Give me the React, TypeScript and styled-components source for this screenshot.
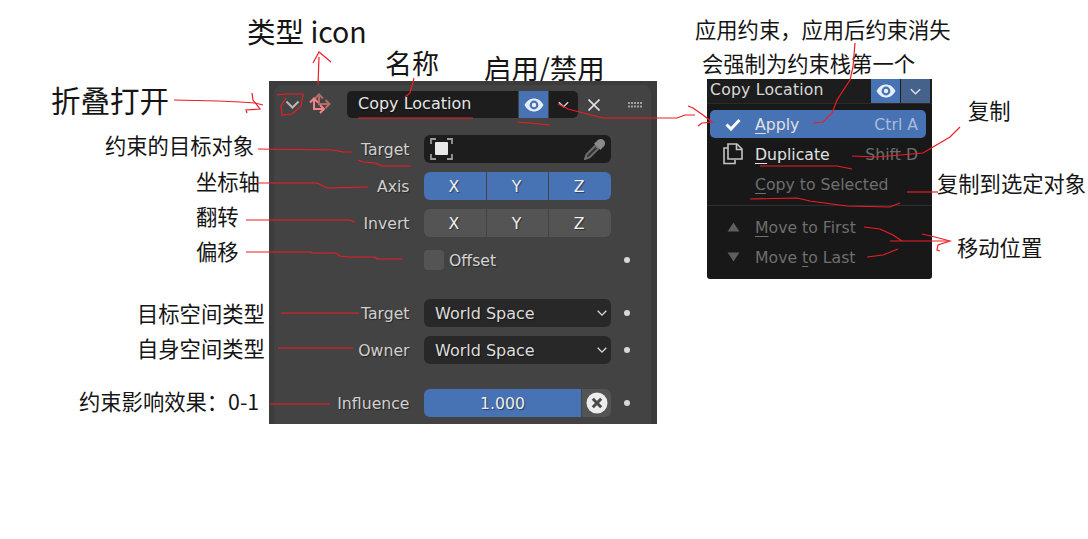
import React from 'react'
import styled, { createGlobalStyle } from 'styled-components'

const GlobalStyle = createGlobalStyle`
  html, body {
    margin: 0;
    padding: 0;
    background: #fff;
  }
`

const Canvas = styled.div`
  position: relative;
  width: 1088px;
  height: 539px;
  overflow: hidden;
  background: #fff;
  font-family: 'DejaVu Sans', sans-serif;
`

const Note = styled.div<{ $x: number; $y: number; $size?: number }>`
  position: absolute;
  left: ${(p) => p.$x}px;
  top: ${(p) => p.$y - (p.$size ?? 21.3) / 2 - 2}px;
  font-family: 'Noto Sans CJK SC', sans-serif;
  font-size: ${(p) => p.$size ?? 21.3}px;
  line-height: 1;
  color: #151515;
  white-space: pre;
`

const Scribbles = styled.svg`
  position: absolute;
  left: 0;
  top: 0;
  z-index: 3;
  pointer-events: none;
`

const Panel = styled.section`
  position: absolute;
  left: 269px;
  top: 81px;
  width: 388px;
  height: 343px;
  box-sizing: border-box;
  padding: 4px 6px 0 5px;
  background: #3c3c3c;
  z-index: 1;
`

const Card = styled.div`
  height: 100%;
  box-sizing: border-box;
  padding-top: 6px;
  background: #434343;
  border-radius: 8px 8px 0 0;
  color: #e6e6e6;
  font-size: 15.7px;
  text-shadow: 1px 1px 1px rgba(0, 0, 0, 0.45);
`

const Header = styled.header`
  display: flex;
  align-items: center;
  height: 27px;
  padding-left: 9px;
`

const HeadIcon = styled.span<{ $w: number; $gap: number }>`
  display: flex;
  align-items: center;
  justify-content: center;
  flex: none;
  width: ${(p) => p.$w}px;
  margin-right: ${(p) => p.$gap}px;
`

const NameGroup = styled.div`
  display: flex;
  height: 27px;
  margin-right: 8px;
  border-radius: 5px;
  overflow: hidden;
`

const NameField = styled.div`
  width: 160px;
  padding-left: 11px;
  background: #1d1d1d;
  line-height: 26px;
  font-size: 16px;
`

const HeadToggle = styled.div<{ $active?: boolean }>`
  display: flex;
  align-items: center;
  justify-content: center;
  width: 29px;
  margin-left: 1px;
  background: ${(p) => (p.$active ? '#4772b3' : '#1d1d1d')};
`

const Row = styled.div<{ $top: number }>`
  display: grid;
  grid-template-columns: 136px 187px 32px;
  column-gap: 14px;
  align-items: center;
  margin-top: ${(p) => p.$top}px;
  height: 28px;
`

const CheckRow = styled(Row)`
  height: 20px;
`

const Label = styled.div`
  padding-right: 0.5px;
  text-align: right;
  color: #d0d0d0;
`

const Dot = styled.span`
  justify-self: start;
  margin-left: -1px;
  width: 6px;
  height: 6px;
  border-radius: 50%;
  background: #d8d8d8;
`

const TargetField = styled.div`
  display: flex;
  align-items: center;
  justify-content: space-between;
  height: 28px;
  padding: 0 5px 0 6px;
  background: #1d1d1d;
  border-radius: 6px;
`

const AxisGroup = styled.div`
  display: grid;
  grid-template-columns: repeat(3, 1fr);
  column-gap: 1px;
  height: 28px;
  border-radius: 6px;
  overflow: hidden;
`

const AxisButton = styled.div<{ $active?: boolean }>`
  display: flex;
  align-items: center;
  justify-content: center;
  padding-right: 2px;
  background: ${(p) => (p.$active ? '#4772b3' : '#545454')};
  color: #f0f0f0;
`

const CheckWrap = styled.div`
  display: flex;
  align-items: center;
  gap: 5px;
  color: #d4d4d4;
`

const CheckBox = styled.span`
  width: 20px;
  height: 20px;
  border-radius: 4px;
  background: #545454;
`

const Select = styled.div`
  display: flex;
  align-items: center;
  justify-content: space-between;
  height: 28px;
  padding: 0 3px 0 11px;
  background: #282828;
  border-radius: 6px;
  color: #dcdcdc;
  font-size: 16px;
`

const SliderGroup = styled.div`
  display: flex;
  height: 28px;
  border-radius: 6px;
  overflow: hidden;
`

const SliderBar = styled.div`
  flex: 1;
  display: flex;
  align-items: center;
  justify-content: center;
  background: #4772b3;
  color: #ececec;
`

const SliderClear = styled.div`
  display: flex;
  align-items: center;
  justify-content: center;
  width: 29px;
  margin-left: 1px;
  background: #545454;
`

const Popup = styled.aside`
  position: absolute;
  left: 707px;
  top: 79px;
  width: 225px;
  height: 200px;
  background: #181818;
  color: #e0e0e0;
  font-size: 15.7px;
  border-radius: 0 0 3px 3px;
  z-index: 1;
`

const PopupHead = styled.div`
  display: flex;
  height: 24px;
  padding-right: 2px;
  background: #1d1d1d;
  border-bottom: 1px solid #2a2a2a;
`

const PopupTitle = styled.div`
  flex: 1;
  padding-left: 3px;
  line-height: 21px;
  letter-spacing: 0.2px;
  color: #d8d8d8;
`

const PopupToggle = styled.div<{ $tone: string }>`
  display: flex;
  align-items: center;
  justify-content: center;
  width: 29px;
  margin-left: 1px;
  background: ${(p) => p.$tone};
`

const MenuList = styled.div`
  padding: 6px 6px 0 3px;
`

const MenuItem = styled.div<{ $active?: boolean; $dim?: boolean }>`
  display: grid;
  grid-template-columns: 45px 1fr auto;
  align-items: center;
  height: 28px;
  margin-bottom: 2px;
  padding-right: 8px;
  border-radius: 5px;
  background: ${(p) => (p.$active ? '#4772b3' : 'transparent')};
  color: ${(p) => (p.$dim ? '#6e6e6e' : '#e0e0e0')};
`

const MenuIcon = styled.span`
  display: flex;
  justify-content: center;
  padding-left: 1px;
`

const Shortcut = styled.span<{ $active?: boolean }>`
  color: ${(p) => (p.$active ? '#a8bcd9' : '#6e6e6e')};
`

const Mnemonic = styled.span`
  text-decoration: underline;
  text-underline-offset: 3px;
`

const Separator = styled.div`
  height: 1px;
  margin: 7px -6px 7px -3px;
  background: #2e2e2e;
`

const Chevron = ({ color = '#d0d0d0', size = 14 }: { color?: string; size?: number }) => (
  <svg width={size} height={size} viewBox="0 0 14 14" fill="none" stroke={color} strokeWidth="1.6">
    <path d="M2 4.5 7 9.5 12 4.5" />
  </svg>
)

const Eye = () => (
  <svg width="20" height="14" viewBox="0 0 20 14">
    <path d="M0.5 7C3 2.5 6.4 0.5 10 0.5S17 2.5 19.5 7C17 11.5 13.6 13.5 10 13.5S3 11.5 0.5 7Z" fill="#e8eef8" />
    <circle cx="10" cy="7" r="4.4" fill="#4772b3" />
    <circle cx="10" cy="7" r="2.2" fill="#e8eef8" />
  </svg>
)

const MoveIcon = () => (
  <svg width="24" height="24" viewBox="0 0 24 24" fill="none" strokeWidth="2">
    <g stroke="#b56a6a">
      <path d="M11 1.5V11H21.5" />
      <path d="M7 5.5 11 1.5 15 5.5M17.5 7 21.5 11 17.5 15" />
    </g>
    <g stroke="#f08585">
      <path d="M6 5.5V16H16" />
      <path d="M2 9.5 6 5.5 10 9.5M12 12 16 16 12 20" />
    </g>
  </svg>
)

const CloseIcon = () => (
  <svg width="12" height="12" viewBox="0 0 12 12" stroke="#e2e2e2" strokeWidth="1.6">
    <path d="M0.5 0.5 11.5 11.5M11.5 0.5 0.5 11.5" />
  </svg>
)

const GripIcon = () => (
  <svg width="16" height="6" viewBox="0 0 16 6" fill="#a0a0a0">
    {[0, 3, 6, 9, 12].flatMap((x) =>
      [0, 3.5].map((y) => <rect key={`${x}-${y}`} x={x + 1} y={y} width="2" height="2" />)
    )}
  </svg>
)

const TargetIcon = () => (
  <svg width="24" height="24" viewBox="0 0 24 24" fill="none">
    <g stroke="#9a9a9a" strokeWidth="1.8">
      <path d="M1 7V2H6M17 2H22V7M22 17V22H17M6 22H1V17" />
    </g>
    <rect x="5" y="5" width="13" height="13" rx="1" fill="#e8e8e8" />
  </svg>
)

const DropperIcon = () => (
  <svg width="22" height="22" viewBox="0 0 22 22">
    <path d="M11.5 7.5 2.5 16.5 1 21 5.5 19.5 14.5 10.5Z" fill="#333" stroke="#6e6e6e" strokeWidth="2" />
    <path d="M10 5.5 12.5 3.5C14 0.8 17.5 0 19.8 2.2C22 4.5 21.2 8 18.5 9.5L16.5 12Z" fill="#8a8a8a" />
  </svg>
)

const ClearIcon = () => (
  <svg width="22" height="22" viewBox="0 0 22 22">
    <circle cx="11" cy="11" r="10.5" fill="#ececec" />
    <path d="M6.8 6.8 15.2 15.2M15.2 6.8 6.8 15.2" stroke="#4a4a4a" strokeWidth="3" />
  </svg>
)

const CheckIcon = () => (
  <svg width="16" height="13" viewBox="0 0 16 13" fill="none" stroke="#fff" strokeWidth="3">
    <path d="M1.5 6.5 6 11 14.5 2" />
  </svg>
)

const DuplicateIcon = () => (
  <svg width="22" height="22" viewBox="0 0 22 22" fill="none" stroke="#c4c4c4" strokeWidth="1.6">
    <path d="M6 5H2V20.5H13V17" />
    <path d="M6 1H15L20 6V16H6Z" />
    <path d="M14.5 1V6.5H20" />
  </svg>
)

const Triangle = ({ down }: { down?: boolean }) => (
  <svg width="13" height="10" viewBox="0 0 14 11" fill="#5f5f5f">
    <path d={down ? 'M0.5 0.5H13.5L7 10.5Z' : 'M7 0.5 13.5 10.5H0.5Z'} />
  </svg>
)

const notes: { text: string; x: number; y: number; size?: number }[] = [
  { text: '类型 icon', x: 247, y: 33, size: 28.5 },
  { text: '名称', x: 385, y: 64, size: 27 },
  { text: '启用/禁用', x: 484, y: 70, size: 27.5 },
  { text: '折叠打开', x: 51, y: 102, size: 29.5 },
  { text: '约束的目标对象', x: 105, y: 147 },
  { text: '坐标轴', x: 196, y: 183 },
  { text: '翻转', x: 196, y: 218 },
  { text: '偏移', x: 196, y: 253 },
  { text: '目标空间类型', x: 137, y: 315 },
  { text: '自身空间类型', x: 137, y: 350 },
  { text: '约束影响效果：0-1', x: 79, y: 403 },
  { text: '应用约束，应用后约束消失', x: 695, y: 31 },
  { text: '会强制为约束栈第一个', x: 702, y: 65 },
  { text: '复制', x: 968, y: 112 },
  { text: '复制到选定对象', x: 937, y: 185 },
  { text: '移动位置', x: 957, y: 249 },
]

const redLines = [
  '318,85 319,57',
  '313,63 319,52 325,57 331,62',
  '414,78 410,93 405,97',
  '358,118 473,118',
  '517,122 530,123 550,125',
  '558,104 568,109 603,118 677,118 685,115 695,115',
  '688,106 693,108 703,115 712,122 702,123 698,126',
  '174,100 218,101 240,102 255,103 263,105',
  '252,93 253,100 260,109 246,110 247,113',
  '277,95 286,94 303,94 301,106 292,114 282,115 281,106 286,98',
  '258,149 333,150 343,152 352,152',
  '358,160 363,162 375,163 382,166 411,166',
  '257,183 317,183 327,188 368,187',
  '246,220 350,220 355,222',
  '246,252 311,252 312,253 336,253 340,256 348,257 375,257 377,259 403,259',
  '281,313 359,313',
  '278,348 353,348',
  '270,404 330,404',
  '855,43 853,67 850,80 837,100 832,113 823,122 813,123',
  '852,156 877,157 923,153 933,147 950,137 960,127',
  '760,166 837,166 852,169',
  '907,192 938,192',
  '750,199 797,198 810,201 847,206 890,207 900,203',
  '864,227 880,229 893,235 902,241',
  '890,241 948,241',
  '867,257 883,255 898,249',
  '922,234 935,237 950,241 938,245 937,250 940,251',
]

function AxisRow({ label, top, active }: { label: string; top: number; active?: boolean }) {
  return (
    <Row $top={top}>
      <Label>{label}</Label>
      <AxisGroup>
        {['X', 'Y', 'Z'].map((axis) => (
          <AxisButton key={axis} $active={active}>
            {axis}
          </AxisButton>
        ))}
      </AxisGroup>
    </Row>
  )
}

function SpaceRow({ label, top }: { label: string; top: number }) {
  return (
    <Row $top={top}>
      <Label>{label}</Label>
      <Select>
        World Space
        <Chevron size={12} color="#d8d8d8" />
      </Select>
      <Dot />
    </Row>
  )
}

export default function App() {
  return (
    <Canvas>
      <GlobalStyle />
      {notes.map((note) => (
        <Note key={note.text} $x={note.x} $y={note.y} $size={note.size}>
          {note.text}
        </Note>
      ))}

      <Panel>
        <Card>
          <Header>
            <HeadIcon $w={18} $gap={7}>
              <Chevron color="#b8b8b8" size={17} />
            </HeadIcon>
            <HeadIcon $w={24} $gap={15}>
              <MoveIcon />
            </HeadIcon>
            <NameGroup>
              <NameField>Copy Location</NameField>
              <HeadToggle $active>
                <Eye />
              </HeadToggle>
              <HeadToggle>
                <Chevron size={13} />
              </HeadToggle>
            </NameGroup>
            <HeadIcon $w={16} $gap={25}>
              <CloseIcon />
            </HeadIcon>
            <HeadIcon $w={16} $gap={0}>
              <GripIcon />
            </HeadIcon>
          </Header>

          <Row $top={17}>
            <Label>Target</Label>
            <TargetField>
              <TargetIcon />
              <DropperIcon />
            </TargetField>
          </Row>
          <AxisRow label="Axis" top={9} active />
          <AxisRow label="Invert" top={9} />
          <CheckRow $top={13}>
            <span />
            <CheckWrap>
              <CheckBox />
              Offset
            </CheckWrap>
            <Dot />
          </CheckRow>
          <SpaceRow label="Target" top={29} />
          <SpaceRow label="Owner" top={9} />
          <Row $top={25}>
            <Label>Influence</Label>
            <SliderGroup>
              <SliderBar>1.000</SliderBar>
              <SliderClear>
                <ClearIcon />
              </SliderClear>
            </SliderGroup>
            <Dot />
          </Row>
        </Card>
      </Panel>

      <Popup>
        <PopupHead>
          <PopupTitle>Copy Location</PopupTitle>
          <PopupToggle $tone="#4772b3">
            <Eye />
          </PopupToggle>
          <PopupToggle $tone="#45628c">
            <Chevron size={13} color="#e0e0e0" />
          </PopupToggle>
        </PopupHead>
        <MenuList>
          <MenuItem $active>
            <MenuIcon>
              <CheckIcon />
            </MenuIcon>
            <span>
              <Mnemonic>A</Mnemonic>pply
            </span>
            <Shortcut $active>Ctrl A</Shortcut>
          </MenuItem>
          <MenuItem>
            <MenuIcon>
              <DuplicateIcon />
            </MenuIcon>
            <span>
              <Mnemonic>D</Mnemonic>uplicate
            </span>
            <Shortcut>Shift D</Shortcut>
          </MenuItem>
          <MenuItem $dim>
            <span />
            <span>
              <Mnemonic>C</Mnemonic>opy to Selected
            </span>
          </MenuItem>
          <Separator />
          <MenuItem $dim>
            <MenuIcon>
              <Triangle />
            </MenuIcon>
            <span>
              <Mnemonic>M</Mnemonic>ove to First
            </span>
          </MenuItem>
          <MenuItem $dim>
            <MenuIcon>
              <Triangle down />
            </MenuIcon>
            <span>
              Move <Mnemonic>t</Mnemonic>o Last
            </span>
          </MenuItem>
        </MenuList>
      </Popup>

      <Scribbles width="1088" height="539" fill="none" stroke="#ee1c25" strokeWidth="1.2">
        {redLines.map((points) => (
          <polyline key={points} points={points} />
        ))}
      </Scribbles>
    </Canvas>
  )
}
